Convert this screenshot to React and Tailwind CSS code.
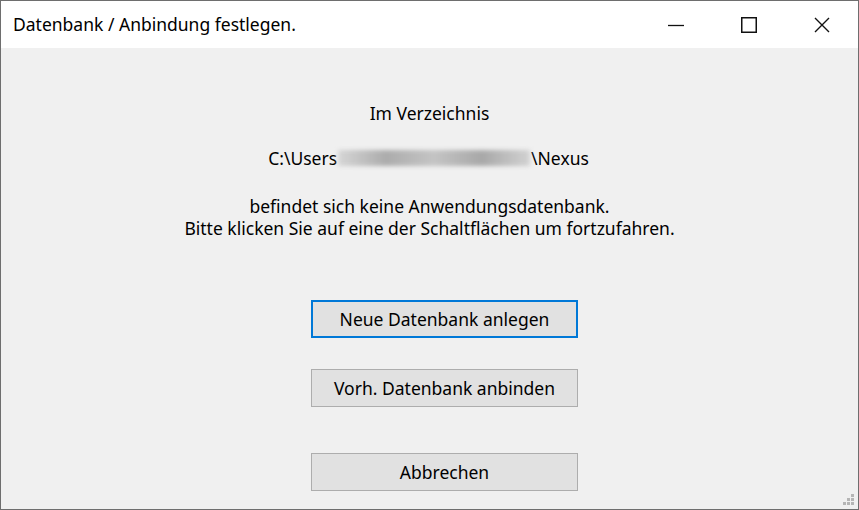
import { useState } from 'react'

const font = { fontFamily: '"Noto Sans", "Open Sans", sans-serif' }

const TitleBar = ({ title }) => (
  <div className="flex h-[47px] items-center bg-white">
    <div className="flex-1 pl-3 text-[17.5px] text-black">{title}</div>
    <div className="flex h-full">
      <button className="flex h-full w-[73px] items-center justify-center">
        <svg width="16" height="16" viewBox="0 0 16 16">
          <path d="M0 8.5h16" stroke="#111" strokeWidth="1.3" />
        </svg>
      </button>
      <button className="flex h-full w-[73px] items-center justify-center">
        <svg width="16" height="16" viewBox="0 0 16 16">
          <rect x="0.75" y="0.75" width="14.5" height="14.5" fill="none" stroke="#111" strokeWidth="1.5" />
        </svg>
      </button>
      <button className="flex h-full w-[73px] items-center justify-center">
        <svg width="16" height="16" viewBox="0 0 16 16">
          <path d="M1 1L15 15M15 1L1 15" stroke="#111" strokeWidth="1.4" />
        </svg>
      </button>
    </div>
  </div>
)

const DialogButton = ({ children, focused }) => (
  <button
    className={
      'h-[38px] w-[267px] bg-[#e1e1e1] text-[17.5px] text-black ' +
      (focused ? 'border-2 border-[#0078d7]' : 'border border-[#adadad]')
    }
  >
    {children}
  </button>
)

const App = () => {
  const [path] = useState({ before: 'C:\\Users', after: '\\Nexus' })

  return (
    <div className="h-[510px] w-[859px] border border-[#6e6e6e] bg-[#f0f0f0]" style={font}>
      <TitleBar title="Datenbank / Anbindung festlegen." />
      <div className="relative flex h-[461px] flex-col items-center text-[17.5px] leading-[22px] text-black">
        <p className="mt-[54px]">Im Verzeichnis</p>
        <p className="mt-[23px] flex items-center pr-[2px]">
          {path.before}
          <span className="relative mx-[1px] inline-block h-[16px] w-[192px] bg-[linear-gradient(90deg,#d6d6d6,#acacac_25%,#c4c4c4_50%,#a8a8a8_75%,#d2d2d2)] blur-[2px]" />
          {path.after}
        </p>
        <p className="mt-[26px] text-center">
          befindet sich keine Anwendungsdatenbank.
          <br />
          Bitte klicken Sie auf eine der Schaltflächen um fortzufahren.
        </p>
        <div className="mt-[61px] flex flex-col items-center pl-[30px]">
          <DialogButton focused>Neue Datenbank anlegen</DialogButton>
          <div className="mt-[31px]">
            <DialogButton>Vorh. Datenbank anbinden</DialogButton>
          </div>
          <div className="mt-[46px]">
            <DialogButton>Abbrechen</DialogButton>
          </div>
        </div>
        <svg className="absolute bottom-[3px] right-[3px]" width="12" height="12" viewBox="0 0 12 12">
          <rect x="8" y="0" width="3" height="3" fill="#b5b5b5" />
          <rect x="4" y="4" width="3" height="3" fill="#b5b5b5" />
          <rect x="8" y="4" width="3" height="3" fill="#b5b5b5" />
          <rect x="0" y="8" width="3" height="3" fill="#b5b5b5" />
          <rect x="4" y="8" width="3" height="3" fill="#b5b5b5" />
          <rect x="8" y="8" width="3" height="3" fill="#b5b5b5" />
        </svg>
      </div>
    </div>
  )
}

export default App
